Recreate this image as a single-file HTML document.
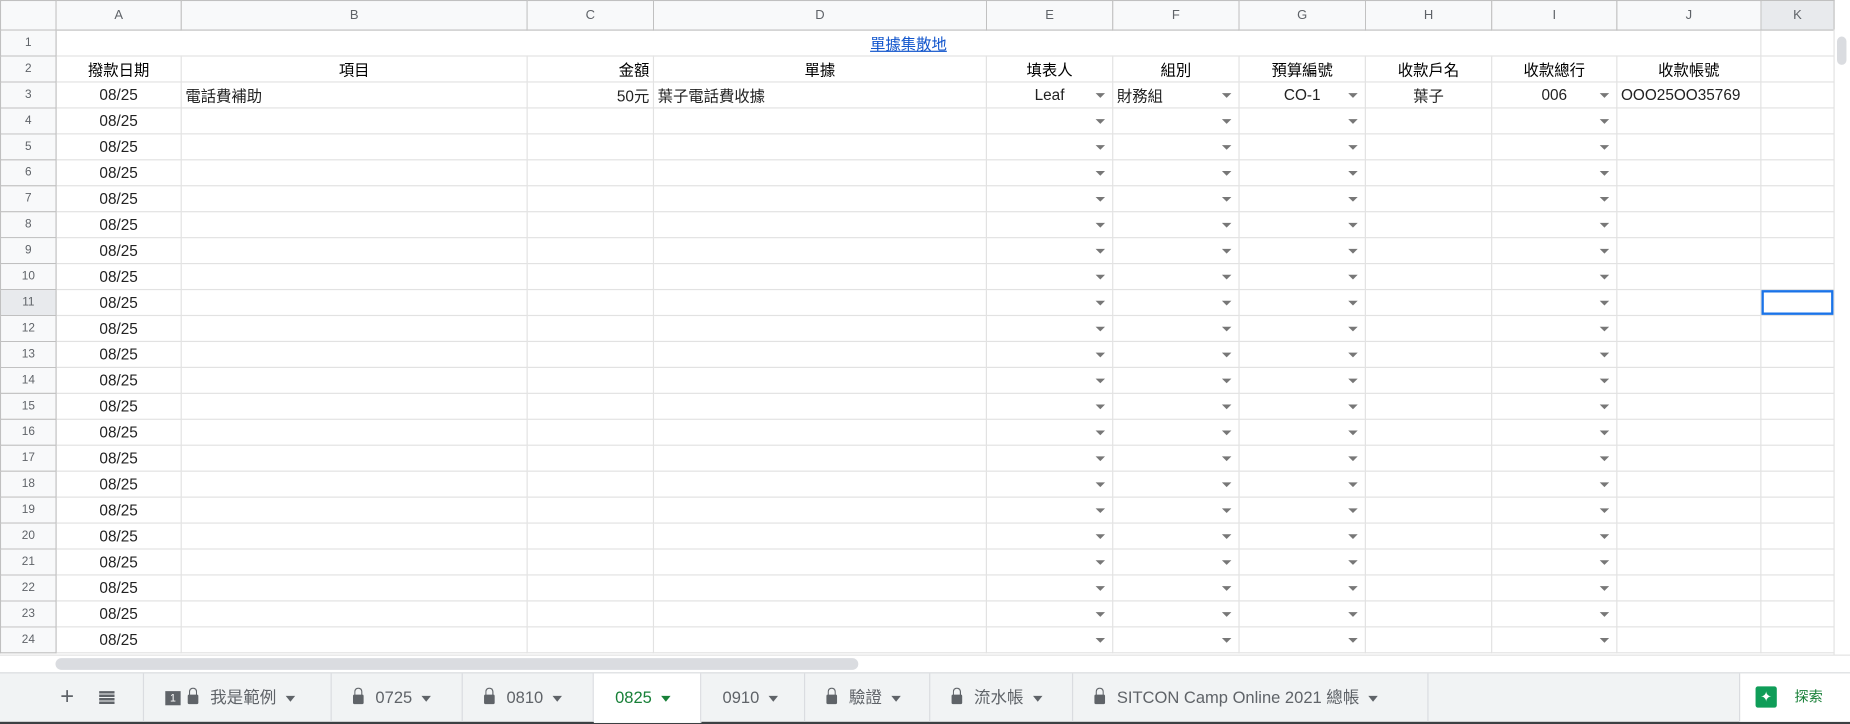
<!DOCTYPE html>
<html><head><meta charset="utf-8">
<style>
html,body{margin:0;padding:0;width:1850px;height:723px;overflow:hidden;background:#fff}
#w{position:absolute;left:0;top:0;width:1567px;height:613px;transform:scale(1.1806,1.1794);transform-origin:0 0;font-family:"Liberation Sans","Noto Sans CJK TC",sans-serif;background:#fff}
table{border-collapse:collapse;table-layout:fixed;position:absolute;left:0;top:0}
td{height:22px;border:1px solid #e2e2e2;padding:0 3px;font-size:13px;color:#222;white-space:nowrap;overflow:hidden;position:relative;box-sizing:border-box}
tr.h td{height:25px;background:#f8f9fa;border-color:#c0c0c0;color:#5f6368;font-size:11px;text-align:center}
td.n{background:#f8f9fa;border-color:#c0c0c0;color:#5f6368;font-size:10px;text-align:center;padding:0}
td.c{text-align:center}
td.r{text-align:right}
td.d::after{content:"";position:absolute;right:6px;top:9px;border-left:4px solid transparent;border-right:4px solid transparent;border-top:4px solid #777}
tr.h td.sel{background:#e8eaed}
tr.s td.n{background:#e8eaed}
td.b{font-weight:normal;color:#000;text-align:center}
.sb{position:absolute;left:1553px;top:25px;width:14px;height:530px;background:#fff;border-left:1px solid #e2e2e2}
.th{position:absolute;left:1556px;top:31px;width:8px;height:24px;background:#dadce0;border-radius:4px}
.hs{position:absolute;left:0;top:555px;width:1567px;height:15px;background:#fff;border-top:1px solid #e2e2e2}
.hth{position:absolute;left:47px;top:558px;width:680px;height:10px;background:#dadce0;border-radius:5px}
.tabs{position:absolute;left:0;top:570px;width:1567px;height:41px;background:#f1f3f4;border-top:1px solid #dadce0;border-bottom:2px solid #3c4043;font-size:14px;color:#5f6368}
.tab{position:absolute;top:0;height:41px;line-height:41px;border-right:1px solid #dadce0;box-sizing:border-box;padding-left:18px}
.ar{display:inline-block;margin-left:8px;border-left:4px solid transparent;border-right:4px solid transparent;border-top:5px solid #5f6368;vertical-align:middle}
.lk{display:inline-block;width:9px;height:8px;background:#5f6368;border-radius:1px;position:relative;margin-right:10px;vertical-align:middle;top:1px}
.lk::before{content:"";position:absolute;left:1px;top:-6px;width:5px;height:6px;border:1.5px solid #5f6368;border-bottom:none;border-radius:4px 4px 0 0}
</style></head><body><div id="w">
<table>
<colgroup><col style="width:47px"><col style="width:106px"><col style="width:293px"><col style="width:107px"><col style="width:282px"><col style="width:107px"><col style="width:107px"><col style="width:107px"><col style="width:107px"><col style="width:106px"><col style="width:122px"><col style="width:62px"></colgroup>
<tr class="h"><td></td><td>A</td><td>B</td><td>C</td><td>D</td><td>E</td><td>F</td><td>G</td><td>H</td><td>I</td><td>J</td><td class="sel">K</td></tr>
<tr><td class="n">1</td><td colspan="10" class="c"><a style="color:#1155cc;text-decoration:underline">單據集散地</a></td><td></td></tr>
<tr><td class="n">2</td><td class="b">撥款日期</td><td class="b">項目</td><td class="b" style="text-align:right">金額</td><td class="b">單據</td><td class="b">填表人</td><td class="b">組別</td><td class="b">預算編號</td><td class="b">收款戶名</td><td class="b">收款總行</td><td class="b">收款帳號</td><td></td></tr>
<tr><td class="n">3</td><td class="c">08/25</td><td>電話費補助</td><td class="r">50元</td><td>葉子電話費收據</td><td class="c d">Leaf</td><td class="d">財務組</td><td class="c d">CO-1</td><td class="c">葉子</td><td class="c d">006</td><td>OOO25OO35769</td><td></td></tr>
<tr><td class="n">4</td><td class="c">08/25</td><td></td><td></td><td></td><td class="d"></td><td class="d"></td><td class="d"></td><td></td><td class="d"></td><td></td><td></td></tr>
<tr><td class="n">5</td><td class="c">08/25</td><td></td><td></td><td></td><td class="d"></td><td class="d"></td><td class="d"></td><td></td><td class="d"></td><td></td><td></td></tr>
<tr><td class="n">6</td><td class="c">08/25</td><td></td><td></td><td></td><td class="d"></td><td class="d"></td><td class="d"></td><td></td><td class="d"></td><td></td><td></td></tr>
<tr><td class="n">7</td><td class="c">08/25</td><td></td><td></td><td></td><td class="d"></td><td class="d"></td><td class="d"></td><td></td><td class="d"></td><td></td><td></td></tr>
<tr><td class="n">8</td><td class="c">08/25</td><td></td><td></td><td></td><td class="d"></td><td class="d"></td><td class="d"></td><td></td><td class="d"></td><td></td><td></td></tr>
<tr><td class="n">9</td><td class="c">08/25</td><td></td><td></td><td></td><td class="d"></td><td class="d"></td><td class="d"></td><td></td><td class="d"></td><td></td><td></td></tr>
<tr><td class="n">10</td><td class="c">08/25</td><td></td><td></td><td></td><td class="d"></td><td class="d"></td><td class="d"></td><td></td><td class="d"></td><td></td><td></td></tr>
<tr class="s"><td class="n">11</td><td class="c">08/25</td><td></td><td></td><td></td><td class="d"></td><td class="d"></td><td class="d"></td><td></td><td class="d"></td><td></td><td style="box-shadow:inset 0 0 0 2px #1a73e8"></td></tr>
<tr><td class="n">12</td><td class="c">08/25</td><td></td><td></td><td></td><td class="d"></td><td class="d"></td><td class="d"></td><td></td><td class="d"></td><td></td><td></td></tr>
<tr><td class="n">13</td><td class="c">08/25</td><td></td><td></td><td></td><td class="d"></td><td class="d"></td><td class="d"></td><td></td><td class="d"></td><td></td><td></td></tr>
<tr><td class="n">14</td><td class="c">08/25</td><td></td><td></td><td></td><td class="d"></td><td class="d"></td><td class="d"></td><td></td><td class="d"></td><td></td><td></td></tr>
<tr><td class="n">15</td><td class="c">08/25</td><td></td><td></td><td></td><td class="d"></td><td class="d"></td><td class="d"></td><td></td><td class="d"></td><td></td><td></td></tr>
<tr><td class="n">16</td><td class="c">08/25</td><td></td><td></td><td></td><td class="d"></td><td class="d"></td><td class="d"></td><td></td><td class="d"></td><td></td><td></td></tr>
<tr><td class="n">17</td><td class="c">08/25</td><td></td><td></td><td></td><td class="d"></td><td class="d"></td><td class="d"></td><td></td><td class="d"></td><td></td><td></td></tr>
<tr><td class="n">18</td><td class="c">08/25</td><td></td><td></td><td></td><td class="d"></td><td class="d"></td><td class="d"></td><td></td><td class="d"></td><td></td><td></td></tr>
<tr><td class="n">19</td><td class="c">08/25</td><td></td><td></td><td></td><td class="d"></td><td class="d"></td><td class="d"></td><td></td><td class="d"></td><td></td><td></td></tr>
<tr><td class="n">20</td><td class="c">08/25</td><td></td><td></td><td></td><td class="d"></td><td class="d"></td><td class="d"></td><td></td><td class="d"></td><td></td><td></td></tr>
<tr><td class="n">21</td><td class="c">08/25</td><td></td><td></td><td></td><td class="d"></td><td class="d"></td><td class="d"></td><td></td><td class="d"></td><td></td><td></td></tr>
<tr><td class="n">22</td><td class="c">08/25</td><td></td><td></td><td></td><td class="d"></td><td class="d"></td><td class="d"></td><td></td><td class="d"></td><td></td><td></td></tr>
<tr><td class="n">23</td><td class="c">08/25</td><td></td><td></td><td></td><td class="d"></td><td class="d"></td><td class="d"></td><td></td><td class="d"></td><td></td><td></td></tr>
<tr><td class="n">24</td><td class="c">08/25</td><td></td><td></td><td></td><td class="d"></td><td class="d"></td><td class="d"></td><td></td><td class="d"></td><td></td><td></td></tr>
</table>
<div class="sb"></div><div class="th"></div>
<div class="hs"></div><div class="hth"></div>
<div class="tabs">
<div style="position:absolute;left:51px;top:0;line-height:41px;font-size:20px;color:#5f6368">+</div>
<div style="position:absolute;left:84px;top:15px;width:13px;height:11px;background:repeating-linear-gradient(#5f6368 0 2px,transparent 2px 3px)"></div>
<div class="tab" style="left:121px;width:160px;border-left:1px solid #dadce0"><span style="display:inline-block;width:13px;height:12px;background:#5f6368;color:#fff;font-size:9px;line-height:12px;text-align:center;vertical-align:middle;margin-right:6px">1</span><span class="lk"></span>我是範例<span class="ar"></span></div>
<div class="tab" style="left:281px;width:111px"><span class="lk"></span>0725<span class="ar"></span></div>
<div class="tab" style="left:392px;width:111px"><span class="lk"></span>0810<span class="ar"></span></div>
<div class="tab" style="left:503px;width:91px;background:#fff;color:#188038;height:42px"><span>0825</span><span class="ar" style="border-top-color:#188038"></span></div>
<div class="tab" style="left:594px;width:88px">0910<span class="ar"></span></div>
<div class="tab" style="left:682px;width:106px"><span class="lk"></span>驗證<span class="ar"></span></div>
<div class="tab" style="left:788px;width:121px"><span class="lk"></span>流水帳<span class="ar"></span></div>
<div class="tab" style="left:909px;width:301px"><span class="lk"></span>SITCON Camp Online 2021 總帳<span class="ar"></span></div>
<div style="position:absolute;left:1473px;top:0;width:94px;height:41px;background:#fff;border-left:1px solid #dadce0">
<div style="position:absolute;left:13px;top:11px;width:18px;height:18px;background:#0f9d58;border-radius:2px;color:#fff;font-size:12px;text-align:center;line-height:18px">✦</div>
<div style="position:absolute;left:46px;top:0;line-height:41px;font-size:12px;color:#188038">探索</div></div>
</div>
</div></body></html>
